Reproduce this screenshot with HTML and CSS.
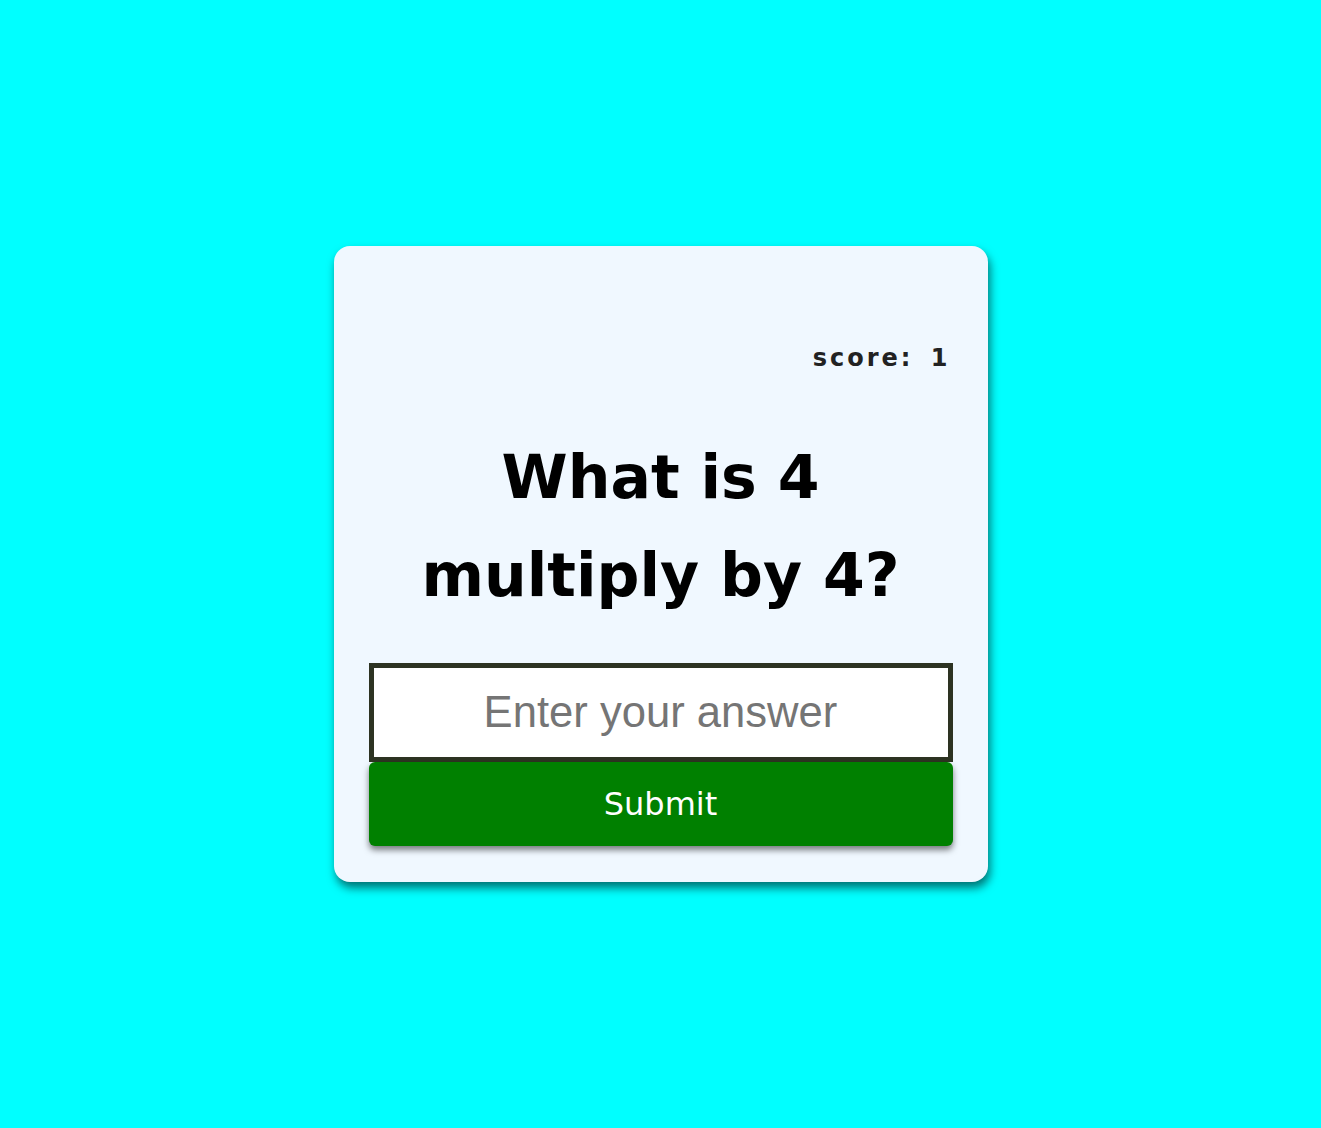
FILE: index.html
```html
<!DOCTYPE html>
<html lang="en">
<head>
<meta charset="utf-8">
<title>Multiplication Quiz</title>
<link rel="stylesheet" href="styles.css">
</head>
<body>
<main class="card">
  <p class="score">score: 1</p>
  <h1 class="question">What is 4 multiply by 4?</h1>
  <form class="answer-form" onsubmit="return false;">
    <input class="answer-input" type="text" placeholder="Enter your answer">
    <button class="submit-btn" type="submit">Submit</button>
  </form>
</main>
</body>
</html>
```

FILE: styles.css
```css
* { box-sizing: border-box; }
html, body { margin: 0; padding: 0; }
body {
  background: #00ffff;
  min-height: 100vh;
  display: flex;
  align-items: center;
  justify-content: center;
  font-family: "Comic Sans MS", "DejaVu Sans", sans-serif;
}
.card {
  width: 654px;
  background: #f0f8ff;
  border-radius: 16px;
  box-shadow: 2px 6px 10px rgba(0, 0, 0, 0.55);
  padding: 35px 35px 36px;
  display: flex;
  flex-direction: column;
}
.score {
  margin: 59px 2px 0 0;
  text-align: right;
  font-size: 24px;
  font-weight: bold;
  color: #222;
  line-height: 36px;
  letter-spacing: 3px;
  word-spacing: 6px;
}
.question {
  margin: 52px 30px 39px;
  text-align: center;
  font-size: 60px;
  line-height: 98px;
  font-weight: bold;
  color: #000;
}
.answer-form {
  display: flex;
  flex-direction: column;
}
.answer-input {
  height: 99px;
  border: 5px solid #2d3322;
  background: #fff;
  font-family: "Liberation Sans", Arial, sans-serif;
  font-size: 43.6px;
  text-align: center;
  color: #000;
  outline: none;
  padding: 0 10px;
}
.answer-input::placeholder { color: #757575; }
.submit-btn {
  height: 84px;
  border: none;
  border-radius: 6px;
  background: #008000;
  color: #fff;
  font-family: "Comic Sans MS", "DejaVu Sans", sans-serif;
  font-size: 32px;
  box-shadow: 0 4px 6px rgba(0, 0, 0, 0.5);
  cursor: pointer;
}
```
